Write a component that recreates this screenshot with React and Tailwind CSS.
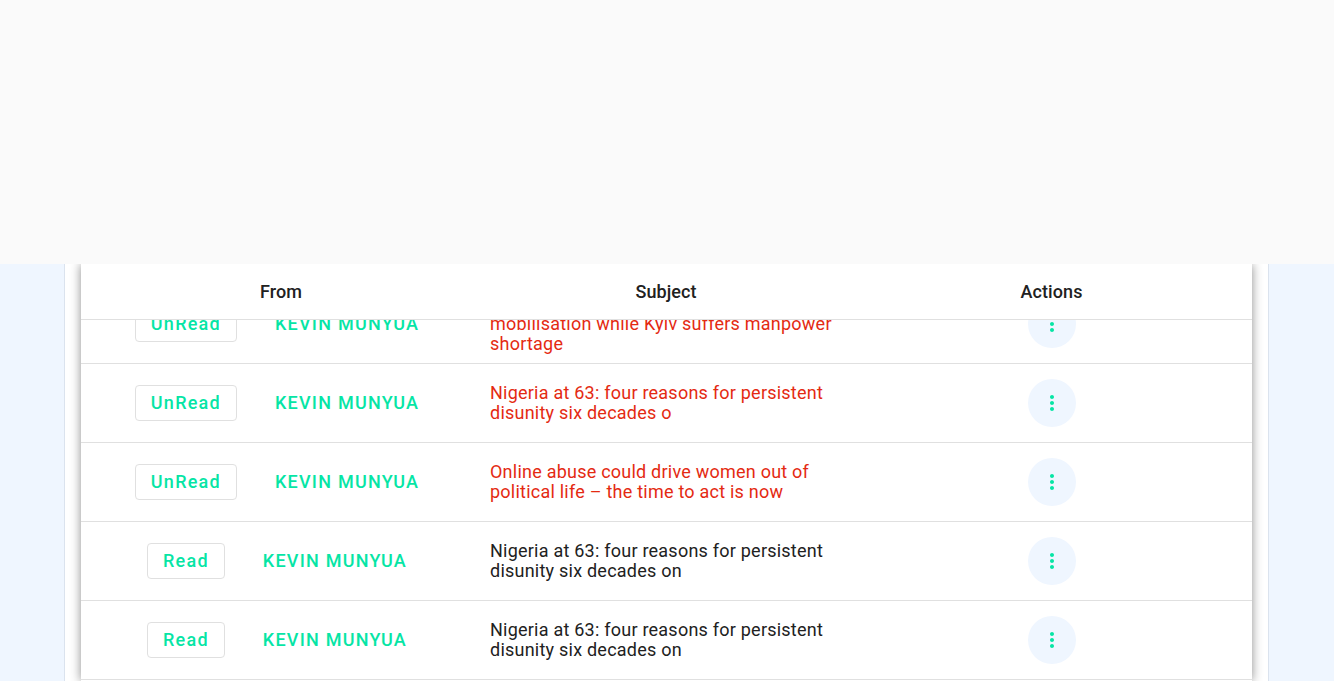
const GREEN = 'text-[#06e5a5]';

const rows = [
  { status: 'UnRead', from: 'KEVIN MUNYUA', subject: 'Ukraine recap: Russia steps up military mobilisation while Kyiv suffers manpower shortage', unread: true },
  { status: 'UnRead', from: 'KEVIN MUNYUA', subject: 'Nigeria at 63: four reasons for persistent disunity six decades o', unread: true },
  { status: 'UnRead', from: 'KEVIN MUNYUA', subject: 'Online abuse could drive women out of political life – the time to act is now', unread: true },
  { status: 'Read', from: 'KEVIN MUNYUA', subject: 'Nigeria at 63: four reasons for persistent disunity six decades on', unread: false },
  { status: 'Read', from: 'KEVIN MUNYUA', subject: 'Nigeria at 63: four reasons for persistent disunity six decades on', unread: false },
];

const MoreIcon = () => (
  <svg width="24" height="24" viewBox="0 0 24 24" fill="#06e5a5">
    <path d="M12 8c1.1 0 2-.9 2-2s-.9-2-2-2-2 .9-2 2 .9 2 2 2zm0 2c-1.1 0-2 .9-2 2s.9 2 2 2 2-.9 2-2-.9-2-2-2zm0 6c-1.1 0-2 .9-2 2s.9 2 2 2 2-.9 2-2-.9-2-2-2z" />
  </svg>
);

const Row = ({ row }) => (
  <div className="flex h-[79px] items-center border-b border-[#e0e0e0]">
    <div className="flex w-[400px] items-center justify-center gap-[38px] pr-2">
      <button className={`h-9 rounded border border-[#e0e0e0] px-[15px] text-lg font-medium tracking-[1.25px] ${GREEN}`}>
        {row.status}
      </button>
      <span className={`text-lg font-medium tracking-[1.25px] ${GREEN}`}>{row.from}</span>
    </div>
    <div className="w-[370px] pl-[9px]">
      <p className={`w-[350px] text-lg leading-5 tracking-[0.23px] ${row.unread ? 'text-[#e42a12]' : 'text-[#212121]'}`}>
        {row.subject}
      </p>
    </div>
    <div className="flex w-[401px] justify-center pl-px">
      <button className="flex h-12 w-12 items-center justify-center rounded-full bg-[#eff6ff]">
        <MoreIcon />
      </button>
    </div>
  </div>
);

const App = () => {
  return (
    <div className="flex h-screen flex-col overflow-hidden bg-[#eff6ff] font-['Roboto',sans-serif]">
      {/* Top bar */}
      <div className="relative z-10 h-[264px] shrink-0 bg-[#fafafa]" />

      <div className="min-h-0 flex-1 px-[64px]">
        <div className="h-full w-[1205px] border-x border-[#dbe3ee] bg-white px-4">
          <div className="flex h-full flex-col bg-white shadow-[0_0_10px_rgba(0,0,0,0.45)]">
            {/* Table header */}
            <div className="flex h-14 shrink-0 items-center border-b border-[#e0e0e0] text-lg font-medium tracking-[0.08px] text-[#212121]">
              <div className="w-[400px] text-center">From</div>
              <div className="w-[370px] text-center">Subject</div>
              <div className="w-[401px] text-center">Actions</div>
            </div>

            {/* Scrolled rows */}
            <div className="min-h-0 flex-1 overflow-hidden">
              <div className="-mt-[35px]">
                {rows.map((row, i) => (
                  <Row key={i} row={row} />
                ))}
              </div>
            </div>
          </div>
        </div>
      </div>
    </div>
  );
};

export default App;
